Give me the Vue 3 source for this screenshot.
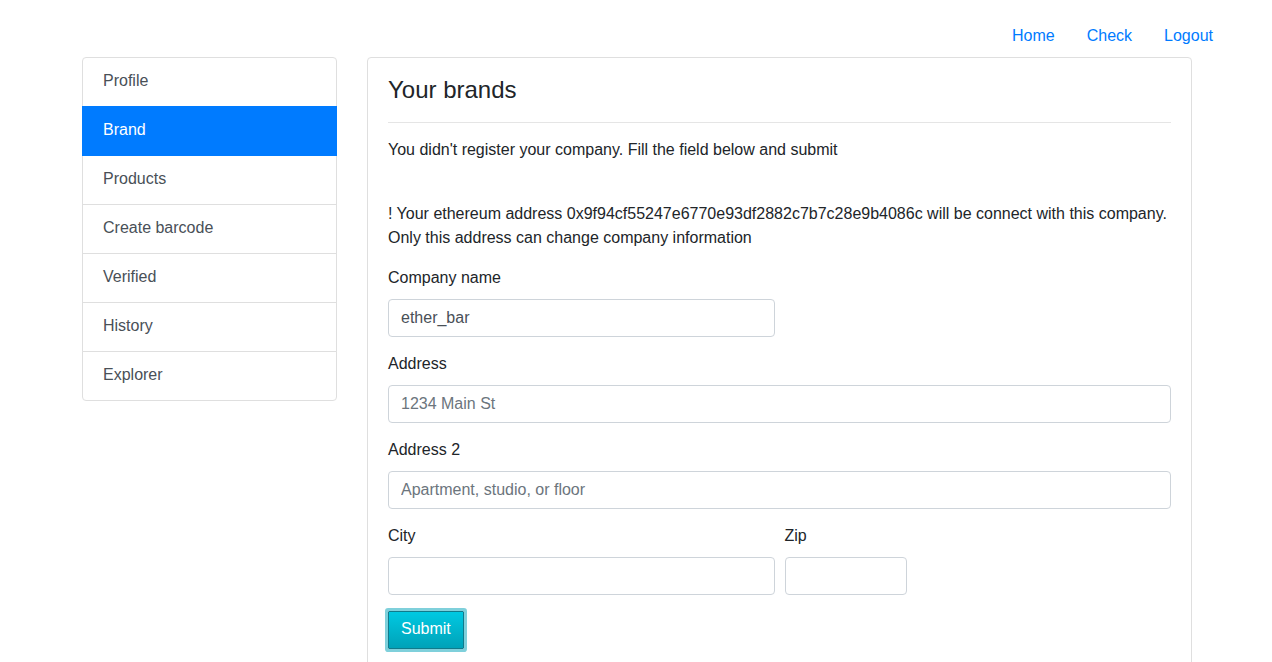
<script setup>
import { ref } from 'vue'

const navLinks = ['Home', 'Check', 'Logout']
const sections = ['Profile', 'Brand', 'Products', 'Create barcode', 'Verified', 'History', 'Explorer']
const active = ref('Brand')
const account = '0x9f94cf55247e6770e93df2882c7b7c28e9b4086c'
const form = ref({ name: 'ether_bar', address: '', address2: '', city: '', zip: '' })
</script>

<template>
  <div class="page">
    <nav class="top-nav">
      <a v-for="link in navLinks" :key="link" class="nav-link" href="#">{{ link }}</a>
    </nav>
    <div class="container">
      <nav class="list-group">
        <a
          v-for="item in sections"
          :key="item"
          href="#"
          class="list-item"
          :class="{ active: item === active }"
          @click.prevent="active = item"
        >{{ item }}</a>
      </nav>
      <main class="card">
        <h4 class="title">Your brands</h4>
        <hr class="divider" />
        <p class="text lead">You didn't register your company. Fill the field below and submit</p>
        <p class="text">! Your ethereum address {{ account }} will be connect with this company. Only this address can change company information</p>
        <form @submit.prevent>
          <div class="form-row">
            <div class="field half">
              <label for="company">Company name</label>
              <input id="company" v-model="form.name" type="text" />
            </div>
          </div>
          <div class="form-row">
            <div class="field full">
              <label for="address">Address</label>
              <input id="address" v-model="form.address" type="text" placeholder="1234 Main St" />
            </div>
          </div>
          <div class="form-row">
            <div class="field full">
              <label for="address2">Address 2</label>
              <input id="address2" v-model="form.address2" type="text" placeholder="Apartment, studio, or floor" />
            </div>
          </div>
          <div class="form-row">
            <div class="field half">
              <label for="city">City</label>
              <input id="city" v-model="form.city" type="text" />
            </div>
            <div class="field sixth">
              <label for="zip">Zip</label>
              <input id="zip" v-model="form.zip" type="text" />
            </div>
          </div>
          <button class="submit" type="submit">Submit</button>
        </form>
      </main>
    </div>
  </div>
</template>

<style>
body {
  margin: 0;
  background: #fff;
}
</style>

<style scoped>
.page,
.page * {
  box-sizing: border-box;
}
.page {
  padding: 16px 0 32px;
  font-family: "Liberation Sans", Arial, sans-serif;
  font-size: 16px;
  line-height: 24px;
  color: #212529;
}
.top-nav {
  display: flex;
  justify-content: flex-end;
  padding-right: 43px;
}
.nav-link {
  padding: 8px 16px 9px;
  color: #007bff;
  text-decoration: none;
}
.container {
  display: grid;
  grid-template-columns: minmax(0, 255fr) minmax(0, 825fr);
  gap: 30px;
  align-items: start;
  max-width: 1140px;
  margin: 0 auto;
  padding: 0 14px 0 16px;
}
.list-group {
  display: flex;
  flex-direction: column;
}
.list-item {
  position: relative;
  padding: 11px 20px 13px;
  margin-bottom: -1px;
  border: 1px solid #dfdfdf;
  background: #fff;
  color: #495057;
  text-decoration: none;
}
.list-item:first-child {
  border-radius: 4px 4px 0 0;
}
.list-item:last-child {
  margin-bottom: 0;
  border-radius: 0 0 4px 4px;
}
.list-item.active {
  z-index: 1;
  background: #007bff;
  border-color: #007bff;
  color: #fff;
}
.card {
  padding: 18px 20px 36px;
  border: 1px solid #dfdfdf;
  border-radius: 4px;
}
.title {
  margin: 0;
  font-size: 24px;
  line-height: 28px;
  font-weight: 400;
}
.divider {
  margin: 18px 0 15px;
  border: 0;
  border-top: 1px solid #e5e5e5;
}
.text {
  margin: 0 0 16px;
}
.text.lead {
  margin-bottom: 40px;
}
.form-row {
  display: flex;
  margin: 0 -5px 15px;
}
.form-row:last-of-type {
  margin-bottom: 16px;
}
.field {
  padding: 0 5px;
}
.full {
  flex: 0 0 100%;
}
.half {
  flex: 0 0 50%;
}
.sixth {
  flex: 0 0 calc(100% / 6);
}
label {
  display: inline-block;
  margin-bottom: 9px;
  vertical-align: top;
}
input {
  display: block;
  width: 100%;
  height: 38px;
  padding: 6px 12px;
  border: 1px solid #ced4da;
  border-radius: 4px;
  background: #fff;
  font: inherit;
  color: #495057;
}
input::placeholder {
  color: #6c757d;
  opacity: 1;
}
.submit {
  display: block;
  height: 38px;
  padding: 5px 12px 7px;
  border: 1px solid #117a8b;
  border-radius: 1px;
  background: linear-gradient(#00c9e2, #00a2b8);
  box-shadow: 0 0 0 3px rgba(0, 162, 184, 0.5);
  font: inherit;
  color: #fff;
}
</style>
